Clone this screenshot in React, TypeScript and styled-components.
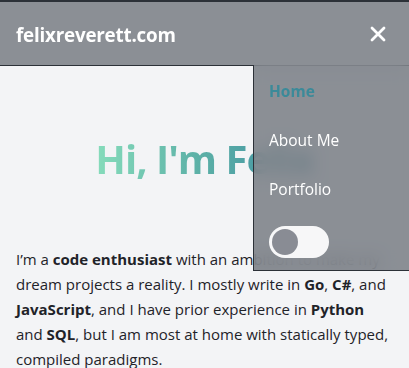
import React from "react";
import styled, { createGlobalStyle } from "styled-components";

const Global = createGlobalStyle`
  html, body { margin: 0; padding: 0; }
  body {
    background: #f3f4f6;
    font-family: "Open Sans", "Noto Sans", sans-serif;
    color: #1f2329;
    overflow: hidden;
  }
`;

const Page = styled.div`
  position: relative;
  width: 409px;
  height: 368px;
  overflow: hidden;
`;

const Header = styled.header`
  position: absolute;
  top: 0;
  left: 0;
  right: 0;
  z-index: 2;
  height: 66px;
  box-sizing: border-box;
  border-top: 2px solid #2c3138;
  border-bottom: 1px solid #2c3138;
  background: rgba(120, 124, 132, 0.85);
  backdrop-filter: blur(6px);
  display: flex;
  align-items: center;
  justify-content: space-between;
  padding: 0 16px;
`;

const Brand = styled.div`
  color: #fff;
  font-weight: 700;
  font-size: 18.8px;
  letter-spacing: -0.2px;
  margin-top: 2px;
`;

const Close = styled.button`
  background: none;
  border: none;
  padding: 0;
  width: 16px;
  height: 16px;
  display: flex;
  align-items: center;
  justify-content: center;
  margin-right: 7px;
`;

const Menu = styled.nav`
  position: absolute;
  top: 65px;
  right: 0;
  width: 156px;
  height: 206px;
  box-sizing: border-box;
  z-index: 3;
  border-left: 1px solid #2c3138;
  border-bottom: 1px solid #2c3138;
  background: rgba(120, 124, 132, 0.85);
  backdrop-filter: blur(8px);
  display: flex;
  flex-direction: column;
  padding: 14px 0 0 15px;
`;

const MenuItem = styled.a<{ $active?: boolean }>`
  display: block;
  height: 49px;
  line-height: 24px;
  font-size: 15.5px;
  text-decoration: none;
  color: ${(p) => (p.$active ? "#3b8a99" : "#ffffff")};
  font-weight: ${(p) => (p.$active ? 700 : 400)};
`;

const Toggle = styled.div`
  width: 60px;
  height: 32px;
  border-radius: 16px;
  background: #f7f7f8;
  display: flex;
  align-items: center;
  padding-left: 3px;
  box-sizing: border-box;
`;

const Knob = styled.div`
  width: 26px;
  height: 26px;
  border-radius: 50%;
  background: #898c94;
`;

const Main = styled.main`
  padding: 66px 16px 0;
`;

const Title = styled.h1`
  margin: 65px auto 0;
  text-align: center;
  font-size: 40px;
  font-weight: 700;
  line-height: 56px;
  letter-spacing: -1px;
  background: linear-gradient(90deg, #86dcbb 0%, #5aaea6 50%, #3f8ea3 100%);
  -webkit-background-clip: text;
  background-clip: text;
  color: transparent;
  display: block;
  width: fit-content;
`;

const Text = styled.p`
  margin: 60px 0 0;
  font-size: 15px;
  line-height: 25px;
  letter-spacing: 0;
  color: #1f2329;
`;

export default function App() {
  return (
    <Page>
      <Global />
      <Header>
        <Brand>felixreverett.com</Brand>
        <Close aria-label="close">
          <svg width="16" height="16" viewBox="0 0 16 16">
            <path d="M2 2 L14 14 M14 2 L2 14" stroke="#fff" strokeWidth="2.8" strokeLinecap="round" />
          </svg>
        </Close>
      </Header>
      <Menu>
        <MenuItem $active>Home</MenuItem>
        <MenuItem>About Me</MenuItem>
        <MenuItem>Portfolio</MenuItem>
        <Toggle>
          <Knob />
        </Toggle>
      </Menu>
      <Main>
        <Title>Hi, I'm Felix</Title>
        <Text>
          I’m a <b>code enthusiast</b> with an ambition to make my dream projects a reality. I
          mostly write in <b>Go</b>, <b>C#</b>, and <b>JavaScript</b>, and I have prior experience
          in <b>Python</b> and <b>SQL</b>, but I am most at home with statically typed, compiled
          paradigms.
        </Text>
      </Main>
    </Page>
  );
}
